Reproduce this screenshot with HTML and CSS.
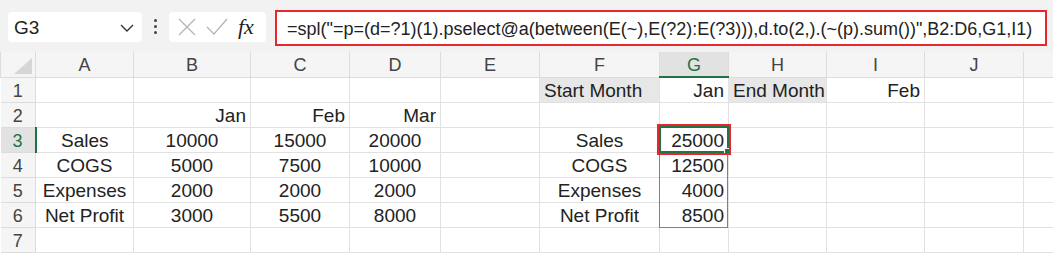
FILE: index.html
```html
<!DOCTYPE html>
<html lang="en">
<head>
    <meta charset="UTF-8">
    <title>Sheet</title>
    <link rel="stylesheet" href="styles.css">
</head>
<body>

    <div class="toolbar">
        <div class="name-box">
            <span>G3</span>
            <svg width="14" height="10" viewBox="0 0 14 10"><path d="M1 2 L7 8 L13 2" fill="none" stroke="#333" stroke-width="1.4"/></svg>
        </div>
        <div class="dots"><i></i><i></i><i></i></div>
        <div class="fx-box">
            <svg width="18" height="18" viewBox="0 0 18 18"><path d="M1 1 L17 17 M17 1 L1 17" stroke="#b5b5b5" stroke-width="1.3"/></svg>
            <svg width="22" height="18" viewBox="0 0 22 18"><path d="M1 9 L8 16 L21 1" fill="none" stroke="#b5b5b5" stroke-width="1.3"/></svg>
            <span class="fx">fx</span>
        </div>
        <div class="formula">=spl("=p=(d=?1)(1).pselect@a(between(E(~),E(?2):E(?3))),d.to(2,).(~(p).sum())",B2:D6,G1,I1)</div>
    </div>

    <div class="sheet">
        <table>
            <colgroup>
                <col style="width:35px">
                <col style="width:98px">
                <col style="width:117px">
                <col style="width:99px">
                <col style="width:91px">
                <col style="width:99px">
                <col style="width:120px">
                <col style="width:69px">
                <col style="width:98px">
                <col style="width:98px">
                <col style="width:99px">
                <col style="width:30px">
            </colgroup>
            <thead>
                <tr>
                    <th class="corner"><span></span></th>
                    <th>A</th><th>B</th><th>C</th><th>D</th><th>E</th><th>F</th>
                    <th class="cur">G</th><th>H</th><th>I</th><th>J</th><th></th>
                </tr>
            </thead>
            <tbody>
                <tr>
                    <th>1</th>
                    <td></td><td></td><td></td><td></td><td></td>
                    <td class="shade left">Start Month</td>
                    <td class="r">Jan</td>
                    <td class="shade left">End Month</td>
                    <td class="r">Feb</td>
                    <td></td><td></td>
                </tr>
                <tr>
                    <th>2</th>
                    <td></td><td class="r">Jan</td><td class="r">Feb</td><td class="r">Mar</td>
                    <td></td><td></td><td></td><td></td><td></td><td></td><td></td>
                </tr>
                <tr>
                    <th class="cur">3</th>
                    <td>Sales</td><td>10000</td><td>15000</td><td>20000</td><td></td>
                    <td>Sales</td><td class="r">25000</td>
                    <td></td><td></td><td></td><td></td>
                </tr>
                <tr>
                    <th>4</th>
                    <td>COGS</td><td>5000</td><td>7500</td><td>10000</td><td></td>
                    <td>COGS</td><td class="r">12500</td>
                    <td></td><td></td><td></td><td></td>
                </tr>
                <tr>
                    <th>5</th>
                    <td>Expenses</td><td>2000</td><td>2000</td><td>2000</td><td></td>
                    <td>Expenses</td><td class="r">4000</td>
                    <td></td><td></td><td></td><td></td>
                </tr>
                <tr>
                    <th>6</th>
                    <td>Net Profit</td><td>3000</td><td>5500</td><td>8000</td><td></td>
                    <td>Net Profit</td><td class="r">8500</td>
                    <td></td><td></td><td></td><td></td>
                </tr>
                <tr>
                    <th>7</th>
                    <td></td><td></td><td></td><td></td><td></td><td></td>
                    <td></td><td></td><td></td><td></td><td></td>
                </tr>
            </tbody>
        </table>

        <div class="range"></div>
        <div class="active"><span class="handle"></span></div>
        <div class="mark"></div>
    </div>

</body>
</html>
```

FILE: styles.css
```css
body {
    margin: 0;
    width: 1053px;
    height: 257px;
    overflow: hidden;
    background: #fff;
    font-family: "Liberation Sans", Arial, sans-serif;
    color: #222;
}
.toolbar {
    height: 52px;
    background: #f2f2f2;
    display: flex;
    align-items: flex-start;
    padding-left: 8px;
    box-sizing: border-box;
}
.name-box {
    margin-top: 12px;
    width: 134px;
    height: 30px;
    background: #fff;
    border-radius: 4px;
    display: flex;
    align-items: center;
    justify-content: space-between;
    padding: 1px 8px 0 6px;
    box-sizing: border-box;
    font-size: 19px;
}
.dots {
    margin: 19px 0 0 12px;
    width: 4px;
    display: flex;
    flex-direction: column;
    gap: 3px;
}
.dots i {
    width: 3px;
    height: 3px;
    background: #444;
    border-radius: 50%;
}
.fx-box {
    margin: 12px 0 0 11px;
    width: 97px;
    height: 30px;
    background: #fff;
    border-radius: 4px;
    display: flex;
    align-items: center;
    padding-left: 9px;
    gap: 10px;
    box-sizing: border-box;
}
.fx {
    font-family: "Liberation Serif", serif;
    font-style: italic;
    font-size: 22px;
    color: #222;
}
.formula {
    margin: 10px 0 0 9px;
    width: 772px;
    height: 36px;
    border: 2px solid #e8262d;
    background: #fff;
    box-sizing: border-box;
    padding: 1px 0 0 10px;
    line-height: 32px;
    font-size: 18px;
    white-space: nowrap;
    overflow: hidden;
}
.sheet {
    position: relative;
}
table {
    table-layout: fixed;
    border-collapse: collapse;
    width: 1053px;
    font-size: 19px;
}
th, td {
    padding: 2px 4px 0;
    border: 1px solid #e1e1e1;
    height: 22px;
    line-height: 22px;
    text-align: center;
    white-space: nowrap;
    overflow: hidden;
    font-weight: normal;
}
thead th {
    background: #f5f5f5;
    color: #444;
    font-size: 18px;
    border-color: #dcdcdc;
    border-top: none;
}
tbody th {
    background: #f5f5f5;
    color: #444;
    font-size: 18px;
    border-left: none;
    border-color: #dcdcdc;
}
thead th.cur {
    background: #e2e2e2;
    color: #217346;
    border-bottom: 2px solid #217346;
}
tbody th.cur {
    background: #e2e2e2;
    color: #217346;
    border-right: 2px solid #217346;
}
.corner {
    position: relative;
}
.corner span {
    position: absolute;
    right: 3px;
    bottom: 3px;
    width: 0;
    height: 0;
    border-left: 18px solid transparent;
    border-bottom: 16px solid #d6d6d6;
}
td.r {
    text-align: right;
}
td.left {
    text-align: left;
}
td.shade {
    background: #e7e7e7;
}
.range {
    position: absolute;
    left: 659px;
    top: 99px;
    width: 69px;
    height: 77px;
    border: 1px solid #5b84d6;
    box-sizing: border-box;
}
.active {
    position: absolute;
    left: 659px;
    top: 74px;
    width: 70px;
    height: 27px;
    border: 2px solid #217346;
    box-sizing: border-box;
}
.handle {
    position: absolute;
    right: -4px;
    bottom: -4px;
    width: 5px;
    height: 5px;
    background: #217346;
    border: 1px solid #fff;
}
.mark {
    position: absolute;
    left: 657px;
    top: 72px;
    width: 74px;
    height: 31px;
    border: 2px solid #e8262d;
    box-sizing: border-box;
}
```
